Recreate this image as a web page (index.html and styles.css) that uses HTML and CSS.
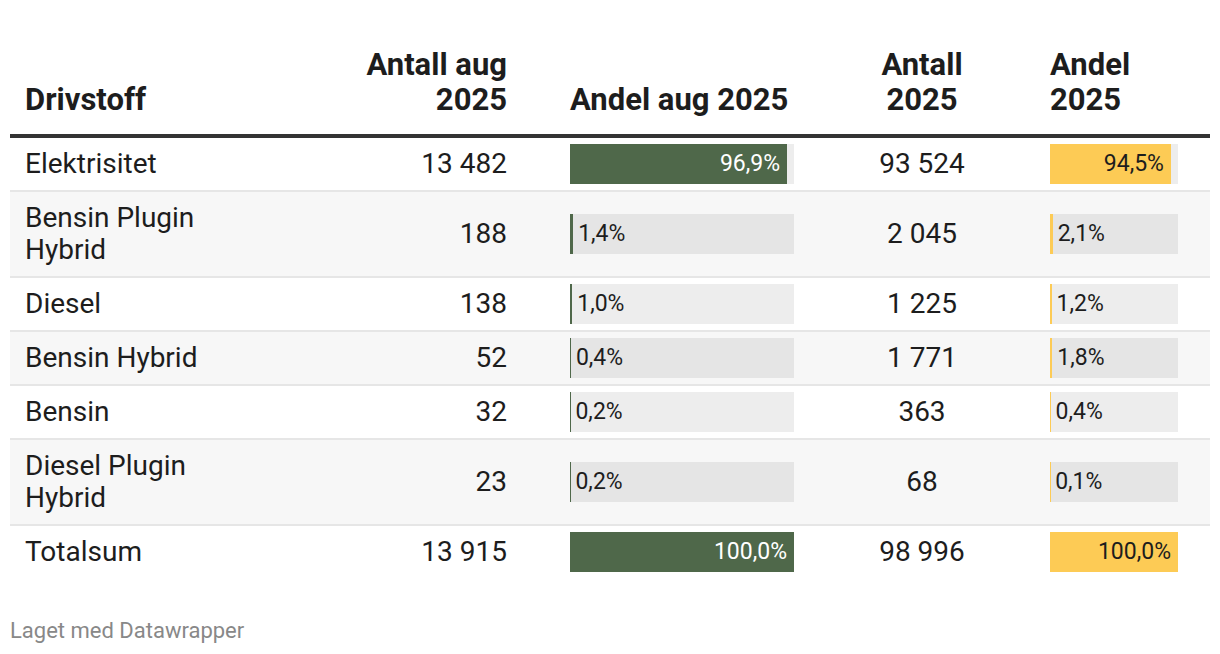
FILE: index.html
```html
<!DOCTYPE html>
<html lang="no">
<head>
<meta charset="utf-8">
<title>Drivstoff</title>
<link rel="stylesheet" href="styles.css">
</head>
<body>
<div class="chart">
  <div class="table">
    <div class="row head">
      <div class="cell c-name">Drivstoff</div>
      <div class="cell c-num">Antall aug<br>2025</div>
      <div class="cell c-bar nowrap">Andel aug 2025</div>
      <div class="cell c-mid">Antall<br>2025</div>
      <div class="cell c-bar2">Andel<br>2025</div>
    </div>

    <div class="row">
      <div class="cell c-name">Elektrisitet</div>
      <div class="cell c-num">13 482</div>
      <div class="cell c-bar"><div class="bar"><div class="fill green" style="width:96.9%"><span class="label in light">96,9%</span></div></div></div>
      <div class="cell c-mid">93 524</div>
      <div class="cell c-bar2"><div class="bar"><div class="fill yellow" style="width:94.5%"><span class="label in">94,5%</span></div></div></div>
    </div>

    <div class="row stripe">
      <div class="cell c-name">Bensin Plugin Hybrid</div>
      <div class="cell c-num">188</div>
      <div class="cell c-bar"><div class="bar"><div class="fill green" style="width:1.4%"></div><span class="label out">1,4%</span></div></div>
      <div class="cell c-mid">2 045</div>
      <div class="cell c-bar2"><div class="bar"><div class="fill yellow" style="width:2.1%"></div><span class="label out">2,1%</span></div></div>
    </div>

    <div class="row">
      <div class="cell c-name">Diesel</div>
      <div class="cell c-num">138</div>
      <div class="cell c-bar"><div class="bar"><div class="fill green" style="width:1.0%"></div><span class="label out">1,0%</span></div></div>
      <div class="cell c-mid">1 225</div>
      <div class="cell c-bar2"><div class="bar"><div class="fill yellow" style="width:1.2%"></div><span class="label out">1,2%</span></div></div>
    </div>

    <div class="row stripe">
      <div class="cell c-name">Bensin Hybrid</div>
      <div class="cell c-num">52</div>
      <div class="cell c-bar"><div class="bar"><div class="fill green" style="width:0.4%"></div><span class="label out">0,4%</span></div></div>
      <div class="cell c-mid">1 771</div>
      <div class="cell c-bar2"><div class="bar"><div class="fill yellow" style="width:1.8%"></div><span class="label out">1,8%</span></div></div>
    </div>

    <div class="row">
      <div class="cell c-name">Bensin</div>
      <div class="cell c-num">32</div>
      <div class="cell c-bar"><div class="bar"><div class="fill green" style="width:0.2%"></div><span class="label out">0,2%</span></div></div>
      <div class="cell c-mid">363</div>
      <div class="cell c-bar2"><div class="bar"><div class="fill yellow" style="width:0.4%"></div><span class="label out">0,4%</span></div></div>
    </div>

    <div class="row stripe">
      <div class="cell c-name">Diesel Plugin Hybrid</div>
      <div class="cell c-num">23</div>
      <div class="cell c-bar"><div class="bar"><div class="fill green" style="width:0.2%"></div><span class="label out">0,2%</span></div></div>
      <div class="cell c-mid">68</div>
      <div class="cell c-bar2"><div class="bar"><div class="fill yellow" style="width:0.1%"></div><span class="label out">0,1%</span></div></div>
    </div>

    <div class="row last">
      <div class="cell c-name">Totalsum</div>
      <div class="cell c-num">13 915</div>
      <div class="cell c-bar"><div class="bar"><div class="fill green" style="width:100%"><span class="label in light">100,0%</span></div></div></div>
      <div class="cell c-mid">98 996</div>
      <div class="cell c-bar2"><div class="bar"><div class="fill yellow" style="width:100%"><span class="label in">100,0%</span></div></div></div>
    </div>
  </div>

  <div class="footer">Laget med Datawrapper</div>
</div>
</body>
</html>
```

FILE: styles.css
```css
* {
  box-sizing: border-box;
}

html, body {
  margin: 0;
  padding: 0;
  background: #ffffff;
}

body {
  font-family: Roboto, "Liberation Sans", Arial, sans-serif;
  color: #1d1d1d;
}

.chart {
  padding: 47px 10px 0 10px;
  width: 1220px;
}

.table {
  width: 1200px;
}

.row {
  display: grid;
  grid-template-columns: 230px 283px 287px 224px 176px;
  align-items: center;
  font-size: 28px;
  line-height: 32px;
  border-bottom: 2px solid #e6e6e6;
}

.row.stripe {
  background: #f7f7f7;
}

.row.last {
  border-bottom: none;
}

.row.head {
  align-items: end;
  font-weight: 700;
  font-size: 31px;
  line-height: 35px;
  border-bottom: 4px solid #333333;
}

.cell {
  padding: 10px 16px;
}

.head .cell {
  padding-top: 0;
  padding-bottom: 17px;
}

.c-name {
  padding-left: 15px;
  text-align: left;
}

.c-num {
  text-align: right;
}

.c-bar {
  padding-left: 47px;
  text-align: left;
}

.c-mid {
  text-align: center;
}

.c-bar2 {
  text-align: left;
  padding-right: 32px;
}

.row:not(.head) .c-bar,
.row:not(.head) .c-bar2 {
  padding-top: 0;
  padding-bottom: 0;
}

.nowrap {
  white-space: nowrap;
}

.bar {
  display: flex;
  height: 40px;
  background: rgba(0, 0, 0, 0.07);
}

.fill {
  height: 40px;
  display: flex;
  justify-content: flex-end;
  flex: none;
}

.fill.green {
  background: #4f684a;
}

.fill.yellow {
  background: #fdcb55;
}

.label {
  font-size: 23px;
  line-height: 40px;
  white-space: nowrap;
  color: #1d1d1d;
}

.label.in {
  padding-right: 7px;
}

.label.light {
  color: #ffffff;
}

.label.out {
  margin-left: 5px;
}

.footer {
  margin-top: 40px;
  font-size: 22px;
  line-height: 26px;
  color: #888888;
}
```
